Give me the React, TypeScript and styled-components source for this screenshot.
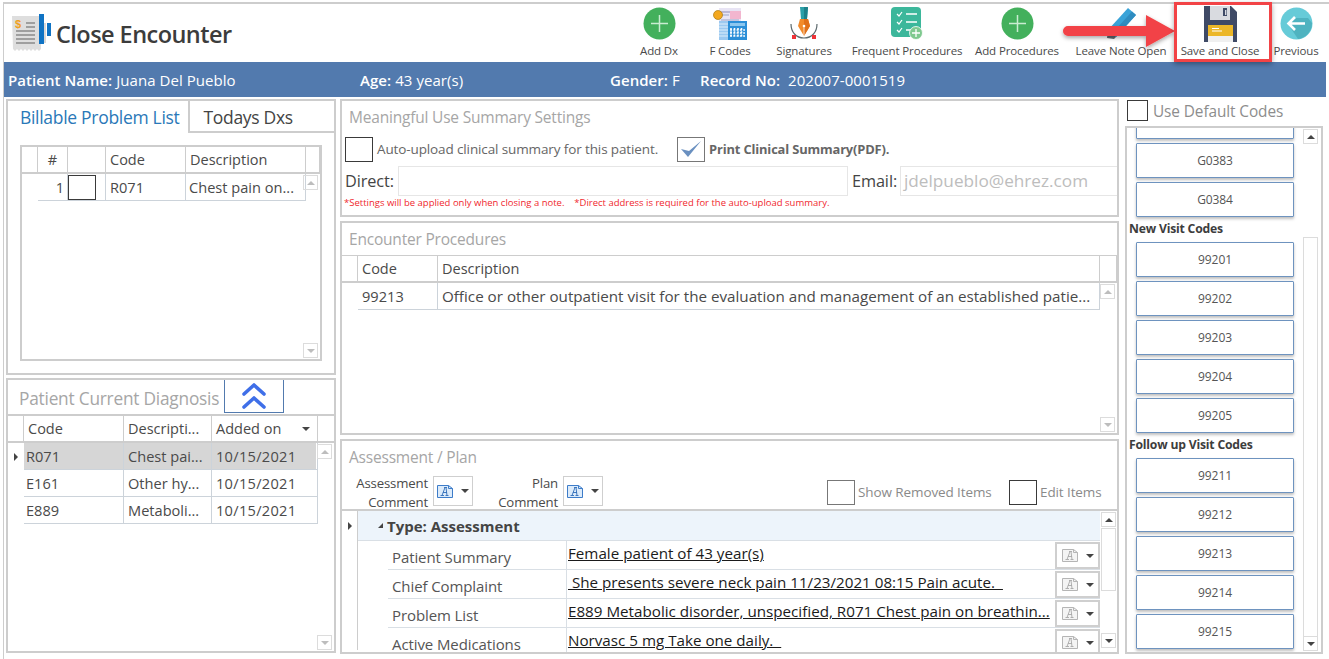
import React from "react";
import styled, { createGlobalStyle } from "styled-components";

const Global = createGlobalStyle`
  * { box-sizing: border-box; }
  html, body { margin: 0; padding: 0; background: #fff; }
  body { font-family: "Open Sans", "Noto Sans", "Liberation Sans", sans-serif; color: #444; overflow: hidden; }
`;

const LINE = "#cdcdcd";
const GRID = "#ccd3da";

const Page = styled.div`
  position: relative;
  width: 1329px;
  height: 659px;
  overflow: hidden;
  padding: 2px 0 0 3px;
`;
const Frame = styled.div`
  border-top: 2px solid ${LINE};
  border-left: 1px solid ${LINE};
  height: 657px;
  display: flex;
  flex-direction: column;
`;
const TopBar = styled.header`
  height: 58px;
  display: flex;
  align-items: stretch;
  justify-content: space-between;
  padding-right: 1px;
`;
const Brand = styled.div`
  display: flex;
  align-items: center;
  padding: 1px 0 0 8px;
  gap: 2px;
`;
const Title = styled.h1`
  margin: 0;
  font-size: 23.5px;
  line-height: 30px;
  font-weight: 600;
  color: #3c3c3c;
  letter-spacing: -0.55px;
`;
const Tools = styled.nav`
  display: flex;
`;
const Tool = styled.div<{ $w: number }>`
  width: ${(p) => p.$w}px;
  display: flex;
  flex-direction: column;
  align-items: center;
  padding-top: 2px;
`;
const ToolIcon = styled.div`
  height: 35px;
  display: flex;
  align-items: center;
  justify-content: center;
`;
const ToolLabel = styled.span`
  margin-top: 2px;
  font-size: 11.5px;
  line-height: 15px;
  letter-spacing: -0.12px;
  white-space: nowrap;
  color: #4a4a4a;
`;
const PatientBar = styled.div`
  height: 35px;
  background: #527aae;
  color: #fff;
  display: flex;
  align-items: center;
  padding: 1px 0 0 4px;
  font-size: 15px;
  letter-spacing: 0.05px;
  margin-right: 3px;
`;
const Field = styled.div<{ $w: number }>`
  width: ${(p) => p.$w}px;
  white-space: nowrap;
  b { font-weight: 600; margin-right: 4px; }
`;
const Main = styled.main`
  flex: 1;
  display: flex;
  padding: 2px 0 0 2px;
`;
const LeftCol = styled.div`
  width: 330px;
  height: 554px;
  display: flex;
  flex-direction: column;
  gap: 3px;
`;
const MidCol = styled.div`
  width: 779px;
  margin-left: 4px;
  height: 555px;
  display: flex;
  flex-direction: column;
  gap: 4px;
`;
const RightCol = styled.div`
  width: 198px;
  margin-left: 6px;
  height: 555px;
  display: flex;
  flex-direction: column;
`;
const Panel = styled.section<{ $h: number }>`
  height: ${(p) => p.$h}px;
  border: 2px solid ${LINE};
  position: relative;
  overflow: hidden;
  flex: none;
`;
const PanelTitle = styled.div<{ $h?: number }>`
  font-size: 15.5px;
  line-height: 22px;
  color: #a6a6a6;
  letter-spacing: -0.2px;
  padding: 5px 0 0 7px;
  height: ${(p) => p.$h || 32}px;
`;
const Tabs = styled.div`
  display: flex;
  height: 32px;
`;
const Tab = styled.div<{ $active?: boolean }>`
  width: ${(p) => (p.$active ? 183 : 144)}px;
  height: 32px;
  font-size: 17.5px;
  line-height: 32px;
  letter-spacing: -0.3px;
  padding-left: ${(p) => (p.$active ? 12 : 13)}px;
  color: ${(p) => (p.$active ? "#2a78b8" : "#444")};
  border-right: ${(p) => (p.$active ? `2px solid ${LINE}` : "none")};
  border-bottom: ${(p) => (p.$active ? "none" : `2px solid ${LINE}`)};
`;
const GridBox = styled.div<{ $w?: number; $h?: number; $bordered?: boolean }>`
  width: ${(p) => (p.$w ? `${p.$w}px` : "auto")};
  height: ${(p) => (p.$h ? `${p.$h}px` : "auto")};
  margin: ${(p) => (p.$bordered ? "12px 0 0 12px" : "0")};
  display: flex;
  flex-direction: column;
  border: ${(p) => (p.$bordered ? `2px solid ${LINE}` : "none")};
`;
const HeaderRow = styled.div<{ $cols: string; $top?: number }>`
  display: grid;
  grid-template-columns: ${(p) => p.$cols};
  height: ${(p) => 27 + (p.$top || 0)}px;
  flex: none;
  border-top: ${(p) => (p.$top ? `${p.$top}px solid ${LINE}` : "none")};
  border-bottom: 2px solid ${LINE};
`;
const HeadCell = styled.div<{ $center?: boolean }>`
  border-right: 1px solid ${LINE};
  font-size: 14.5px;
  line-height: 26px;
  padding: 0 4px;
  color: #4a4a4a;
  white-space: nowrap;
  overflow: hidden;
  display: flex;
  justify-content: ${(p) => (p.$center ? "center" : "space-between")};
  align-items: center;
`;
const GridBody = styled.div`
  flex: 1;
  display: flex;
  min-height: 0;
`;
const Spacer = styled.div`
  width: 16px;
  flex: none;
`;
const Rows = styled.div`
  flex: 1;
  min-width: 0;
`;
const Row = styled.div<{ $cols: string; $sel?: boolean }>`
  display: grid;
  grid-template-columns: ${(p) => p.$cols};
  height: 27px;
  background: ${(p) => (p.$sel ? "#d6d6d6" : "transparent")};
`;
const Cell = styled.div<{ $align?: string; $plain?: boolean; $pad?: number; $fs?: number; $ls?: number }>`
  font-size: ${(p) => p.$fs || 14.6}px;
  letter-spacing: ${(p) => p.$ls || 0}px;
  line-height: 26px;
  padding: 0 ${(p) => (p.$align === "right" ? 3 : 0)}px 0 ${(p) => (p.$pad === undefined ? 2 : p.$pad)}px;
  color: #4a4a4a;
  white-space: nowrap;
  overflow: hidden;
  text-overflow: ellipsis;
  border-right: ${(p) => (p.$plain ? "none" : `1px solid ${GRID}`)};
  border-bottom: ${(p) => (p.$plain ? "none" : `1px solid ${GRID}`)};
  display: flex;
  align-items: center;
  justify-content: ${(p) => (p.$align === "right" ? "flex-end" : "flex-start")};
  span { overflow: hidden; white-space: nowrap; }
`;
const ScrollTrack = styled.div<{ $w?: number }>`
  width: ${(p) => p.$w || 18}px;
  flex: none;
  display: flex;
  flex-direction: column;
  justify-content: space-between;
  padding: 1px;
`;
const ScrollBtn = styled.div<{ $dark?: boolean; $down?: boolean }>`
  width: 15px;
  height: 15px;
  flex: none;
  border: 1px solid #dcdcdc;
  display: flex;
  align-items: center;
  justify-content: center;
  &::after {
    content: "";
    border-left: 4px solid transparent;
    border-right: 4px solid transparent;
    border-bottom: ${(p) => (p.$down ? "none" : `4px solid ${p.$dark ? "#444" : "#bdbdbd"}`)};
    border-top: ${(p) => (p.$down ? `4px solid ${p.$dark ? "#444" : "#bdbdbd"}` : "none")};
  }
`;
const ScrollThumb = styled.div<{ $h: number }>`
  width: 15px;
  height: ${(p) => p.$h}px;
  border: 1px solid #dcdcdc;
  margin: 1px 0 auto;
`;
const RowMark = styled.div`
  width: 0;
  height: 0;
  margin: auto;
  border-top: 4px solid transparent;
  border-bottom: 4px solid transparent;
  border-left: 4px solid #444;
`;
const Check = styled.div<{ $muted?: boolean }>`
  width: 28px;
  height: 25px;
  flex: none;
  background: #fff;
  border: 1px solid ${(p) => (p.$muted ? "#777" : "#3a3a3a")};
  display: flex;
  align-items: center;
  justify-content: center;
`;
const DiagHead = styled.div`
  display: flex;
  height: 34px;
`;
const DiagTitle = styled.div`
  font-size: 17.3px;
  line-height: 24px;
  letter-spacing: -0.22px;
  color: #a6a6a6;
  padding: 7px 0 0 11px;
  width: 216px;
  white-space: nowrap;
`;
const CollapseBtn = styled.div`
  width: 60px;
  height: 34px;
  margin-top: -1px;
  border: 1px solid #527aae;
  display: flex;
  align-items: center;
  justify-content: center;
`;
const MarkGutter = styled.div`
  width: 16px;
  flex: none;
  height: 27px;
  display: flex;
`;
const OptionRow = styled.div`
  display: flex;
  align-items: center;
  height: 26px;
  padding-left: 3px;
  margin-top: 3px;
`;
const OptionText = styled.span<{ $w: number; $bold?: boolean }>`
  font-size: ${(p) => (p.$bold ? 12.9 : 13.5)}px;
  letter-spacing: ${(p) => (p.$bold ? "-0.15px" : "-0.12px")};
  font-weight: ${(p) => (p.$bold ? 700 : 400)};
  color: #666;
  width: ${(p) => p.$w}px;
  padding-left: 4px;
  white-space: nowrap;
`;
const AddressRow = styled.div`
  display: flex;
  align-items: center;
  height: 30px;
  padding-left: 3px;
  margin-top: 4px;
`;
const AddrLabel = styled.span<{ $w: number; $pad?: number }>`
  font-size: 16.3px;
  letter-spacing: -0.1px;
  width: ${(p) => p.$w}px;
  padding-left: ${(p) => p.$pad || 0}px;
  color: #444;
  flex: none;
`;
const AddrInput = styled.div<{ $w: number }>`
  width: ${(p) => p.$w}px;
  height: 30px;
  flex: none;
  border: 1px solid #e6e6e6;
  font-size: 17.2px;
  line-height: 28px;
  padding-left: 3px;
  color: #bdbdbd;
  white-space: nowrap;
  overflow: hidden;
`;
const Note = styled.div`
  font-size: 9.5px;
  color: #f01f2e;
  line-height: 12px;
  padding: 1px 0 0 2px;
  white-space: pre;
`;
const PlanTools = styled.div`
  display: flex;
  height: 37px;
  align-items: flex-start;
`;
const CommentLabel = styled.div<{ $w: number }>`
  width: ${(p) => p.$w}px;
  text-align: right;
  font-size: 13.2px;
  line-height: 19px;
  letter-spacing: -0.15px;
  color: #4a4a4a;
  padding: 2px 5px 0 0;
  flex: none;
  white-space: nowrap;
`;
const DropBtn = styled.div<{ $inRow?: boolean }>`
  width: ${(p) => (p.$inRow ? 45 : 40)}px;
  height: ${(p) => (p.$inRow ? 27 : 30)}px;
  flex: none;
  margin-top: ${(p) => (p.$inRow ? 0 : 4)}px;
  border: ${(p) => (p.$inRow ? 2 : 1)}px solid #cfcfcf;
  display: flex;
  align-items: center;
  justify-content: center;
  gap: 7px;
`;
const Caret = styled.span`
  width: 0;
  height: 0;
  border-left: 4px solid transparent;
  border-right: 4px solid transparent;
  border-top: 4px solid #444;
`;
const SortCaret = styled(Caret)`
  margin-right: 3px;
`;
const RightOptions = styled.div`
  margin-left: auto;
  display: flex;
  align-items: center;
  height: 30px;
  margin-top: 5px;
  padding-right: 14px;
`;
const SmallOpt = styled.span<{ $w: number }>`
  font-size: 13.5px;
  letter-spacing: -0.1px;
  color: #8a8a8a;
  padding-left: 3px;
  width: ${(p) => p.$w}px;
  white-space: nowrap;
`;
const PlanGrid = styled.div`
  border-top: 2px solid ${LINE};
  display: flex;
  height: 141px;
`;
const MarkCol = styled.div`
  width: 16px;
  flex: none;
  border-right: 1px solid ${LINE};
  padding-top: 11px;
  display: flex;
  align-items: flex-start;
  justify-content: center;
  ${RowMark} { margin: 0; }
`;
const PlanBody = styled.div`
  flex: 1;
  min-width: 0;
`;
const GroupRow = styled.div`
  height: 30px;
  background: #edf4fb;
  border-bottom: 1px solid #d9dfe5;
  font-size: 15px;
  font-weight: 700;
  color: #444;
  display: flex;
  align-items: center;
  padding-left: 20px;
  gap: 4px;
`;
const GroupCaret = styled.span`
  width: 0;
  height: 0;
  border-bottom: 5px solid #444;
  border-left: 5px solid transparent;
`;
const PlanRow = styled.div`
  display: grid;
  grid-template-columns: 179px 488px 45px;
  height: 29px;
  margin-left: 30px;
  border-bottom: 1px solid #d9dfe5;
`;
const PlanLabel = styled.div`
  font-size: 15px;
  line-height: 30px;
  padding: 1px 0 0 4px;
  color: #555;
  letter-spacing: -0.1px;
  border-right: 1px solid #d9dfe5;
  white-space: nowrap;
`;
const PlanValue = styled.div`
  font-size: 15.2px;
  line-height: 20px;
  padding: 2px 0 0 1px;
  color: #1b1b1b;
  text-decoration: underline;
  white-space: pre;
  overflow: hidden;
`;
const PlanBtnCell = styled.div`
  padding: 1px 0 0 0;
`;
const PlanScroll = styled.div`
  width: 17px;
  flex: none;
  display: flex;
  flex-direction: column;
  padding: 1px 0 2px 1px;
`;
const DefaultRow = styled.div`
  height: 27px;
  display: flex;
  align-items: center;
  padding: 0 0 5px 2px;
  flex: none;
`;
const DefaultCheck = styled(Check)`
  width: 21px;
  height: 21px;
`;
const DefaultText = styled.span`
  font-size: 15.4px;
  letter-spacing: -0.1px;
  color: #8d8d8d;
  padding: 2px 0 0 5px;
`;
const CodesBox = styled.div`
  height: 528px;
  border: 2px solid ${LINE};
  display: flex;
  overflow: hidden;
`;
const CodeList = styled.div`
  width: 176px;
  padding-left: 2px;
  margin-top: -24px;
  flex: none;
`;
const CodeBtn = styled.div`
  width: 158px;
  height: 35px;
  margin: 0 0 4px 7px;
  background: #fff;
  border: 1px solid #6e93bf;
  box-shadow: 0 2px 3px rgba(0, 0, 0, 0.25);
  border-radius: 1px;
  font-size: 12px;
  line-height: 33px;
  letter-spacing: -0.1px;
  text-align: center;
  color: #555;
`;
const CodeHead = styled.div`
  font-size: 12.2px;
  font-weight: 700;
  line-height: 16px;
  letter-spacing: -0.2px;
  color: #3d3d3d;
  height: 20px;
  margin-top: 1px;
  margin-bottom: 1px;
`;
const CodeScroll = styled.div`
  flex: none;
  width: 17px;
  display: flex;
  flex-direction: column;
  padding: 1px 0 1px 0;
`;
const CodeTrack = styled.div`
  margin-top: 93px;
  flex: 1;
  width: 15px;
  border: 1px solid #dcdcdc;
  border-bottom: none;
`;
const Highlight = styled.div`
  position: absolute;
  left: 1174px;
  top: 2px;
  width: 98px;
  height: 60px;
  border: 3px solid #f24346;
  box-shadow: 0 2px 5px rgba(0, 0, 0, 0.35);
  pointer-events: none;
`;
const ArrowOverlay = styled.svg`
  position: absolute;
  left: 1058px;
  top: 12px;
  pointer-events: none;
`;

const PlusCircle = () => (
  <svg width="33" height="33" viewBox="0 0 33 33">
    <circle cx="16.5" cy="16.5" r="16" fill="#43b05c" />
    <path d="M16.5 8v17M8 16.5h17" stroke="#c9ecd1" strokeWidth="1.5" />
  </svg>
);
const FCodesIcon = () => (
  <svg width="34" height="34" viewBox="0 0 34 34">
    <rect x="6" y="1" width="22" height="30" fill="#e8e4f4" />
    <path d="M6 5h22" stroke="#8f8bb8" strokeWidth="1" />
    <rect x="17" y="4" width="11" height="8" fill="#f2b6cf" />
    <path d="M8 8h8M8 13h18" stroke="#9aa6c8" strokeWidth="1" />
    <rect x="6" y="14" width="13" height="19" fill="#9cc9f0" />
    <path d="M6 17h12M6 20h12M6 23h12M6 26h12M6 29h12" stroke="#dceefb" strokeWidth="1" />
    <circle cx="5" cy="8" r="4.5" fill="#f3a81f" stroke="#a9780f" strokeWidth="0.7" />
    <rect x="15" y="14" width="19" height="19" fill="#2b8fd8" />
    <rect x="17" y="16" width="15" height="3" fill="#8cc7ef" />
    <path d="M18 21v10M21.5 21v10M25 21v10M28.5 21v10M17 23h15M17 26h15M17 29h15" stroke="#fff" strokeWidth="1.6" strokeDasharray="2 1.3" />
  </svg>
);
const SignatureIcon = () => (
  <svg width="30" height="34" viewBox="0 0 30 34">
    <path d="M11 0h8l-1 12h-6z" fill="#2ba0a8" />
    <path d="M15 0h4l-1 12h-3z" fill="#1e8089" />
    <path d="M11 12h8l2 7-6 10-6-10z" fill="#f28a2a" />
    <path d="M15 12h4l2 7-6 10z" fill="#e0701a" />
    <circle cx="15" cy="19" r="1.3" fill="#fff" />
    <path d="M15 20v9" stroke="#fff" strokeWidth="0.7" />
    <path d="M2 17c0 8 5 14 13 14s13-6 13-14" fill="none" stroke="#5d6a6e" strokeWidth="1.2" />
    <rect x="3" y="28" width="4" height="4" fill="#ed3237" />
    <rect x="23" y="28" width="4" height="4" fill="#ed3237" />
  </svg>
);
const FrequentIcon = () => (
  <svg width="32" height="34" viewBox="0 0 32 34">
    <rect x="0" y="0" width="30" height="30" rx="4" fill="#3cb79b" />
    <path d="M6 7l2 2 3-4M6 15l2 2 3-4M6 23l2 2 3-4" fill="none" stroke="#fff" strokeWidth="1.2" />
    <path d="M15 7h11M15 15h11M15 23h6" stroke="#fff" strokeWidth="1.3" />
    <circle cx="25" cy="26" r="6.5" fill="#7fc98f" stroke="#fff" strokeWidth="0.8" />
    <path d="M25 22v8M21 26h8" stroke="#fff" strokeWidth="1.3" />
  </svg>
);
const MarkerIcon = () => (
  <svg width="36" height="34" viewBox="0 0 36 34">
    <path d="M25 1l8 7L13 30l-8-7z" fill="#3aa3d8" />
    <path d="M29 4.500l4 3.500L13 30l-4-3.500z" fill="#2f8cc0" />
    <path d="M5 23l8 7-2 2-7-1z" fill="#5f6a70" />
  </svg>
);
const SaveIcon = () => (
  <svg width="33" height="36" viewBox="0 0 33 36">
    <path d="M0 0h27l6 6v30H0z" fill="#3f4a66" />
    <path d="M6 0h20v14H6z" fill="#d9dbe0" />
    <rect x="19" y="2" width="4" height="8" fill="#3f4a66" />
    <rect x="21" y="4" width="1.4" height="5" fill="#d9dbe0" />
    <rect x="4" y="19" width="25" height="17" fill="#f0f0f0" />
    <rect x="4" y="19" width="25" height="11" fill="#ecb728" />
    <path d="M8 22.500h7M8 25h10" stroke="#fff" strokeWidth="1.1" />
  </svg>
);
const PrevIcon = () => (
  <svg width="33" height="33" viewBox="0 0 33 33">
    <circle cx="16.5" cy="16.5" r="16" fill="#66cbd8" />
    <path d="M8 17l8-6h12l4 5a16 16 0 0 1-14 16z" fill="#4fb3c0" />
    <path d="M25 16.500H9M15 10l-6.500 6.500L15 23" fill="none" stroke="#fff" strokeWidth="2.6" />
  </svg>
);
const Logo = () => (
  <svg width="42" height="40" viewBox="0 0 42 40">
    <path d="M0 2h29v33l-2 2-2-2-2 2-2-2-2 2-2-2-2 2-2-2-2 2-2-2-2 2-2-2-2 2-2-2z" fill="#dedede" />
    <path d="M14 9h9M14 13h9M4 17h19M4 21h19M4 25h19M4 29h19" stroke="#8a8a8a" strokeWidth="1.6" />
    <text x="3" y="14" fontSize="11" fontWeight="700" fill="#f0a020" fontFamily="'Liberation Sans', sans-serif">$</text>
    <rect x="27" y="0" width="5" height="30" fill="#0f73c4" />
    <path d="M32 9h2v20h-2z" fill="#d8d8d8" />
    <rect x="35" y="9" width="4" height="13" fill="#0f73c4" />
  </svg>
);
const NoteIcon = ({ muted }: { muted?: boolean }) => (
  <svg width="17" height="15" viewBox="0 0 17 15">
    <path d="M.5 1.500h11l4 3v9H.5z" fill={muted ? "#f4f4f4" : "#dcebfa"} stroke={muted ? "#b5b5b5" : "#3d7cc9"} strokeWidth="1" />
    <path d="M7 3.500h3M8 3.500l-3 8M3.500 11.500h3.500M9 3.500l1 8M8.500 11.500h3M6 8.500h4" fill="none" stroke={muted ? "#a8a8a8" : "#2f6cb8"} strokeWidth="0.9" />
    <path d="M11.500 1.500v3h4" fill="none" stroke={muted ? "#b5b5b5" : "#3d7cc9"} strokeWidth="1" />
  </svg>
);

const tools: [string, number, React.ReactNode][] = [
  ["Add Dx", 78, <PlusCircle />],
  ["F Codes", 64, <FCodesIcon />],
  ["Signatures", 84, <SignatureIcon />],
  ["Frequent Procedures", 122, <FrequentIcon />],
  ["Add Procedures", 98, <PlusCircle />],
  ["Leave Note Open", 110, <MarkerIcon />],
  ["Save and Close", 88, <SaveIcon />],
  ["Previous", 64, <PrevIcon />],
];

const billCols = "16px 30px 38px 80px 120px";
const diagCols = "16px 100px 88px 106px 18px";
const diagRow = "100px 88px 106px";
const procCols = "16px 80px 662px 1fr";

const diags = [
  ["R071", "Chest pai...", "10/15/2021"],
  ["E161", "Other hy...", "10/15/2021"],
  ["E889", "Metaboli...", "10/15/2021"],
];
const planRows = [
  ["Patient Summary", "Female patient of 43 year(s)"],
  ["Chief Complaint", " She presents severe neck pain 11/23/2021 08:15 Pain acute.  "],
  ["Problem List", "E889 Metabolic disorder, unspecified, R071 Chest pain on breathin..."],
  ["Active Medications", "Norvasc 5 mg Take one daily.  "],
];
const codeGroups: [string | null, string[]][] = [
  [null, ["", "G0383", "G0384"]],
  ["New Visit Codes", ["99201", "99202", "99203", "99204", "99205"]],
  ["Follow up Visit Codes", ["99211", "99212", "99213", "99214", "99215"]],
];

export default function App() {
  return (
    <Page>
      <Global />
      <Frame>
        <TopBar>
          <Brand>
            <Logo />
            <Title>Close Encounter</Title>
          </Brand>
          <Tools>
            {tools.map(([label, w, icon]) => (
              <Tool key={label} $w={w}>
                <ToolIcon>{icon}</ToolIcon>
                <ToolLabel>{label}</ToolLabel>
              </Tool>
            ))}
          </Tools>
        </TopBar>
        <PatientBar>
          <Field $w={352}><b>Patient Name:</b>Juana Del Pueblo</Field>
          <Field $w={250}><b>Age:</b>43 year(s)</Field>
          <Field $w={90}><b>Gender:</b>F</Field>
          <Field $w={300}><b>Record No:</b> 202007-0001519</Field>
        </PatientBar>
        <Main>
          <LeftCol>
            <Panel $h={276}>
              <Tabs>
                <Tab $active>Billable Problem List</Tab>
                <Tab>Todays Dxs</Tab>
              </Tabs>
              <GridBox $w={302} $h={216} $bordered>
                <HeaderRow $cols={billCols + " 1fr"}>
                  <HeadCell />
                  <HeadCell $center>#</HeadCell>
                  <HeadCell />
                  <HeadCell>Code</HeadCell>
                  <HeadCell>Description</HeadCell>
                  <HeadCell />
                </HeaderRow>
                <GridBody>
                  <Rows>
                    <Row $cols={billCols}>
                      <Cell $plain />
                      <Cell $align="right">1</Cell>
                      <Cell $pad={0}><Check /></Cell>
                      <Cell $pad={4}>R071</Cell>
                      <Cell $pad={3}><span>Chest pain on...</span></Cell>
                    </Row>
                  </Rows>
                  <ScrollTrack>
                    <ScrollBtn />
                    <ScrollBtn $down />
                  </ScrollTrack>
                </GridBody>
              </GridBox>
            </Panel>
            <Panel $h={275}>
              <DiagHead>
                <DiagTitle>Patient Current Diagnosis</DiagTitle>
                <CollapseBtn>
                  <svg width="26" height="30" viewBox="0 0 26 30">
                    <path d="M3 13L13 4l10 9M3 26l10-9 10 9" fill="none" stroke="#3f6fe8" strokeWidth="3.6" strokeLinecap="round" strokeLinejoin="round" />
                  </svg>
                </CollapseBtn>
              </DiagHead>
              <GridBox $h={237}>
                <HeaderRow $cols={diagCols} $top={2}>
                  <HeadCell />
                  <HeadCell>Code</HeadCell>
                  <HeadCell>Descripti...</HeadCell>
                  <HeadCell>Added on <SortCaret /></HeadCell>
                  <HeadCell />
                </HeaderRow>
                <GridBody>
                  <Spacer>
                    <MarkGutter><RowMark /></MarkGutter>
                  </Spacer>
                  <Rows>
                    {diags.map((d, i) => (
                      <Row key={d[0]} $cols={diagRow} $sel={i === 0}>
                        <Cell>{d[0]}</Cell>
                        <Cell $pad={4}><span>{d[1]}</span></Cell>
                        <Cell $pad={4} $ls={0.28}>{d[2]}</Cell>
                      </Row>
                    ))}
                  </Rows>
                  <ScrollTrack>
                    <ScrollBtn />
                    <ScrollBtn $down />
                  </ScrollTrack>
                </GridBody>
              </GridBox>
            </Panel>
          </LeftCol>
          <MidCol>
            <Panel $h={118}>
              <PanelTitle>Meaningful Use Summary Settings</PanelTitle>
              <OptionRow>
                <Check />
                <OptionText $w={304}>Auto-upload clinical summary for this patient.</OptionText>
                <Check $muted>
                  <svg width="24" height="20" viewBox="0 0 24 20">
                    <path d="M2 10l7 8L22 2l-12 10z" fill="#6a90c0" />
                  </svg>
                </Check>
                <OptionText $w={200} $bold>Print Clinical Summary(PDF).</OptionText>
              </OptionRow>
              <AddressRow>
                <AddrLabel $w={53}>Direct:</AddrLabel>
                <AddrInput $w={450} />
                <AddrLabel $w={52} $pad={4}>Email:</AddrLabel>
                <AddrInput $w={218}>jdelpueblo@ehrez.com</AddrInput>
              </AddressRow>
              <Note>{"*Settings will be applied only when closing a note.    *Direct address is required for the auto-upload summary."}</Note>
            </Panel>
            <Panel $h={214}>
              <PanelTitle>Encounter Procedures</PanelTitle>
              <GridBox $h={178}>
                <HeaderRow $cols={procCols} $top={1}>
                  <HeadCell />
                  <HeadCell>Code</HeadCell>
                  <HeadCell>Description</HeadCell>
                  <HeadCell />
                </HeaderRow>
                <GridBody>
                  <Spacer />
                  <Rows>
                    <Row $cols="80px 662px">
                      <Cell $pad={4}>99213</Cell>
                      <Cell $pad={4} $fs={15.2}><span>Office or other outpatient visit for the evaluation and management of an established patie...</span></Cell>
                    </Row>
                  </Rows>
                  <ScrollTrack>
                    <ScrollBtn />
                    <ScrollBtn $down />
                  </ScrollTrack>
                </GridBody>
              </GridBox>
            </Panel>
            <Panel $h={215}>
              <PanelTitle $h={31}>Assessment / Plan</PanelTitle>
              <PlanTools>
                <CommentLabel $w={91}>Assessment<br />Comment</CommentLabel>
                <DropBtn><NoteIcon /><Caret /></DropBtn>
                <CommentLabel $w={90}>Plan<br />Comment</CommentLabel>
                <DropBtn><NoteIcon /><Caret /></DropBtn>
                <RightOptions>
                  <Check $muted />
                  <SmallOpt $w={154}>Show Removed Items</SmallOpt>
                  <Check />
                  <SmallOpt $w={66}>Edit Items</SmallOpt>
                </RightOptions>
              </PlanTools>
              <PlanGrid>
                <MarkCol><RowMark /></MarkCol>
                <PlanBody>
                  <GroupRow><GroupCaret />Type: Assessment</GroupRow>
                  {planRows.map(([label, value]) => (
                    <PlanRow key={label}>
                      <PlanLabel>{label}</PlanLabel>
                      <PlanValue>{value}</PlanValue>
                      <PlanBtnCell>
                        <DropBtn $inRow><NoteIcon muted /><Caret /></DropBtn>
                      </PlanBtnCell>
                    </PlanRow>
                  ))}
                </PlanBody>
                <PlanScroll>
                  <ScrollBtn $dark />
                  <ScrollThumb $h={63} />
                  <ScrollBtn $dark $down />
                </PlanScroll>
              </PlanGrid>
            </Panel>
          </MidCol>
          <RightCol>
            <DefaultRow>
              <DefaultCheck />
              <DefaultText>Use Default Codes</DefaultText>
            </DefaultRow>
            <CodesBox>
              <CodeList>
                {codeGroups.map(([head, codes], i) => (
                  <div key={i}>
                    {head && <CodeHead>{head}</CodeHead>}
                    {codes.map((c) => <CodeBtn key={c || "partial"}>{c}</CodeBtn>)}
                  </div>
                ))}
              </CodeList>
              <CodeScroll>
                <ScrollBtn $dark />
                <CodeTrack />
                <ScrollBtn $dark $down />
              </CodeScroll>
            </CodesBox>
          </RightCol>
        </Main>
      </Frame>
      <ArrowOverlay width="120" height="50" viewBox="0 0 120 50">
        <defs>
          <filter id="arrowShade" x="-10%" y="-20%" width="120%" height="150%">
            <feDropShadow dx="0" dy="2" stdDeviation="2" floodOpacity="0.35" />
          </filter>
        </defs>
        <path d="M10 14h78V3l29 16-29 16V24H10a5 5 0 0 1 0-10z" fill="#f24346" filter="url(#arrowShade)" />
      </ArrowOverlay>
      <Highlight />
    </Page>
  );
}
